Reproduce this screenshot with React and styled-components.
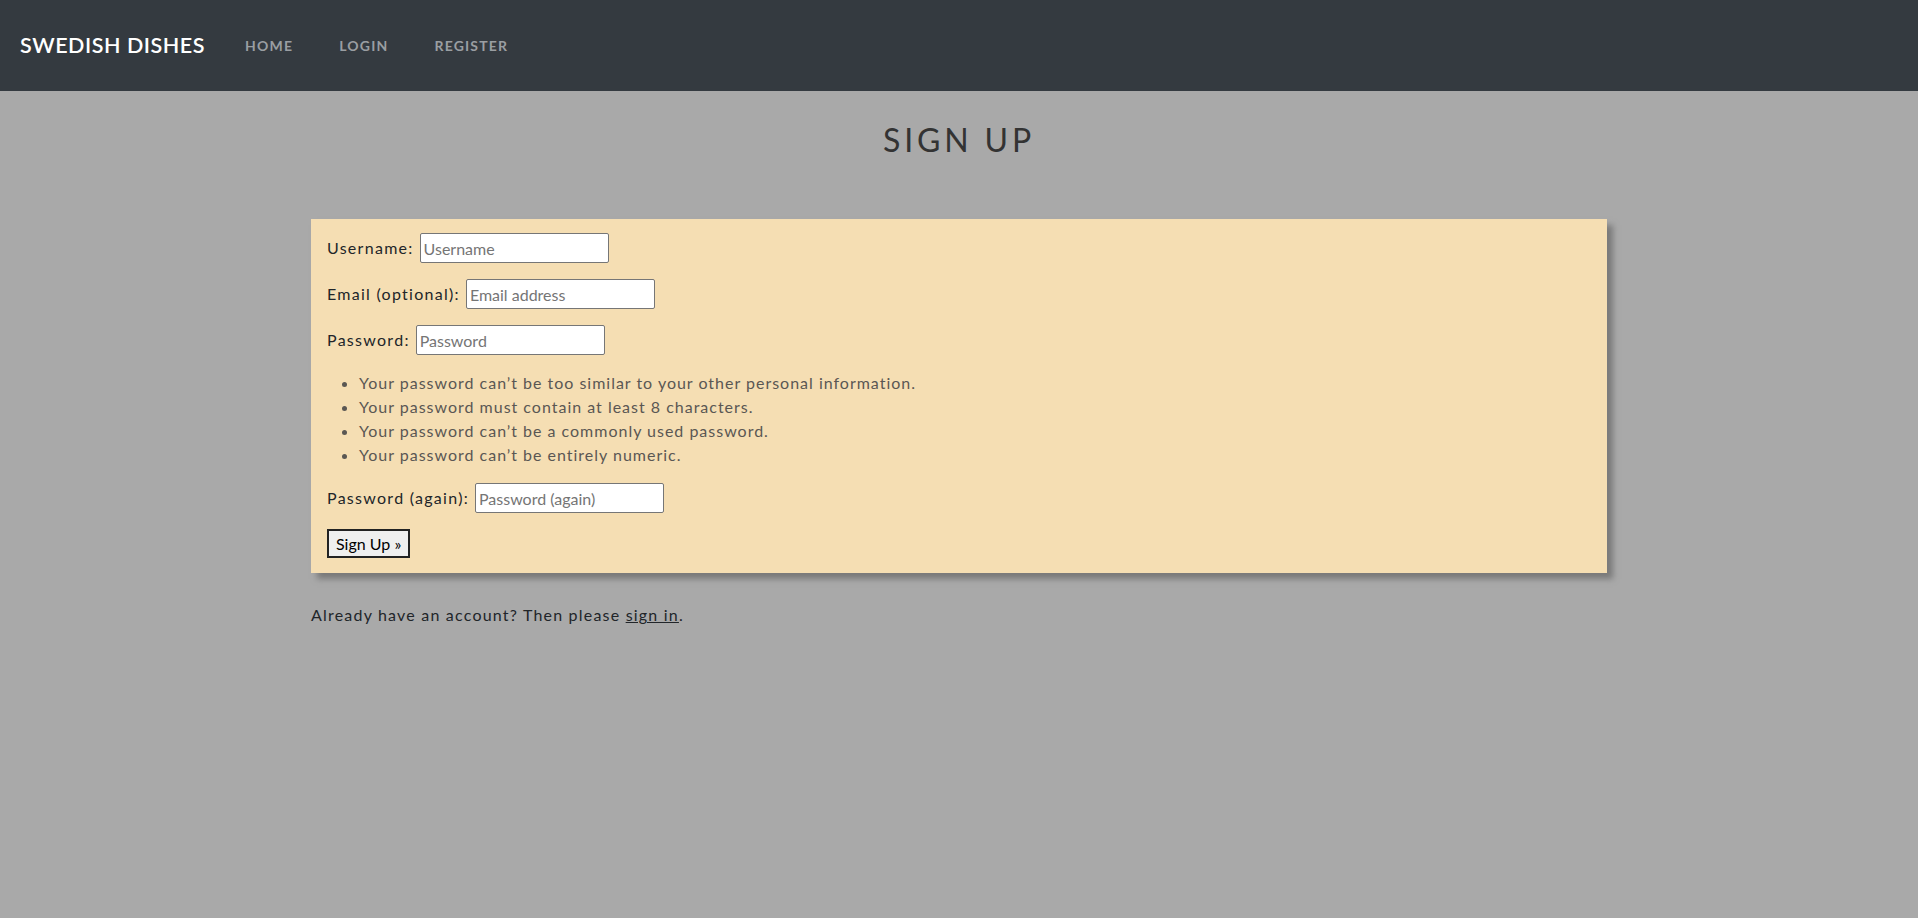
import styled, { createGlobalStyle } from "styled-components";

const GlobalStyle = createGlobalStyle`
  html, body {
    margin: 0;
    padding: 0;
  }
  body {
    background: #a9a9a9;
    font-family: "Lato", "Noto Sans", sans-serif;
    font-size: 16px;
    line-height: 1.5;
    color: #212529;
    letter-spacing: 0.075em;
  }
  * {
    box-sizing: border-box;
  }
`;

const helpTexts = [
  "Your password can’t be too similar to your other personal information.",
  "Your password must contain at least 8 characters.",
  "Your password can’t be a commonly used password.",
  "Your password can’t be entirely numeric.",
];

export default function App() {
  return (
    <>
      <GlobalStyle />
      <NavBar>
        <Brand href="#">SWEDISH DISHES</Brand>
        <NavLinks>
          <NavLink href="#">HOME</NavLink>
          <NavLink href="#">LOGIN</NavLink>
          <NavLink href="#">REGISTER</NavLink>
        </NavLinks>
      </NavBar>
      <Main>
        <Title>SIGN UP</Title>
        <Card>
          <form onSubmit={(e) => e.preventDefault()}>
            <Row>
              <label htmlFor="id_username">Username:</label>
              <Input id="id_username" placeholder="Username" />
            </Row>
            <Row>
              <label htmlFor="id_email">Email (optional):</label>
              <Input id="id_email" placeholder="Email address" />
            </Row>
            <Row>
              <label htmlFor="id_password1">Password:</label>
              <Input id="id_password1" type="password" placeholder="Password" />
            </Row>
            <HelpList>
              {helpTexts.map((t) => (
                <li key={t}>{t}</li>
              ))}
            </HelpList>
            <Row>
              <label htmlFor="id_password2">Password (again):</label>
              <Input
                id="id_password2"
                type="password"
                placeholder="Password (again)"
              />
            </Row>
            <SubmitBtn type="submit">Sign Up »</SubmitBtn>
          </form>
        </Card>
        <Note>
          Already have an account? Then please <a href="#">sign in</a>.
        </Note>
      </Main>
    </>
  );
}

const NavBar = styled.nav`
  height: 91px;
  background: #343a40;
  display: flex;
  align-items: center;
  padding: 0 20px;
`;
const Brand = styled.a`
  color: #fff;
  text-decoration: none;
  font-size: 21.5px;
  font-weight: 600;
  letter-spacing: 0.025em;
  margin-right: 17px;
`;
const NavLinks = styled.div`
  display: flex;
`;
const NavLink = styled.a`
  color: #9a9ea2;
  text-decoration: none;
  font-size: 14px;
  font-weight: 700;
  letter-spacing: 0.085em;
  padding: 0 23px;
`;
const Main = styled.main`
  width: 1296px;
  margin: 0 auto;
`;
const Title = styled.h1`
  margin: 30px 0 60px;
  text-align: center;
  font-size: 32px;
  font-weight: 400;
  line-height: 1.2;
  letter-spacing: 0.12em;
  color: #333;
`;
const Card = styled.div`
  background: #f5deb3;
  padding: 14px 16px 15px;
  box-shadow: 6px 6px 6px #7a7a7a;
`;
const Row = styled.p`
  margin: 0 0 16px;
  display: flex;
  align-items: center;
  gap: 6px;
  height: 30px;
  label {
    font-weight: 400;
    letter-spacing: 0.08em;
  }
`;
const Input = styled.input`
  width: 189px;
  height: 30px;
  padding: 1px 3px;
  border: 1px solid #767676;
  border-radius: 2px;
  background: #fff;
  font-family: "Lato", "Noto Sans", sans-serif;
  font-size: 16px;
  letter-spacing: 0;
  &::placeholder {
    color: #757575;
  }
`;
const HelpList = styled.ul`
  margin: 0 0 16px;
  padding-left: 32px;
  color: #5a5753;
  font-weight: 400;
  font-size: 16px;
  letter-spacing: 0.062em;
  li {
    line-height: 24px;
  }
`;
const SubmitBtn = styled.button`
  display: block;
  height: 29px;
  padding: 0 7px;
  background: #efefef;
  border: 2px solid #222;
  font-family: "Lato", "Noto Sans", sans-serif;
  font-size: 16px;
  letter-spacing: 0;
  color: #000;
  cursor: pointer;
`;
const Note = styled.p`
  margin: 30px 0 0;
  a {
    color: #212529;
  }
`;
